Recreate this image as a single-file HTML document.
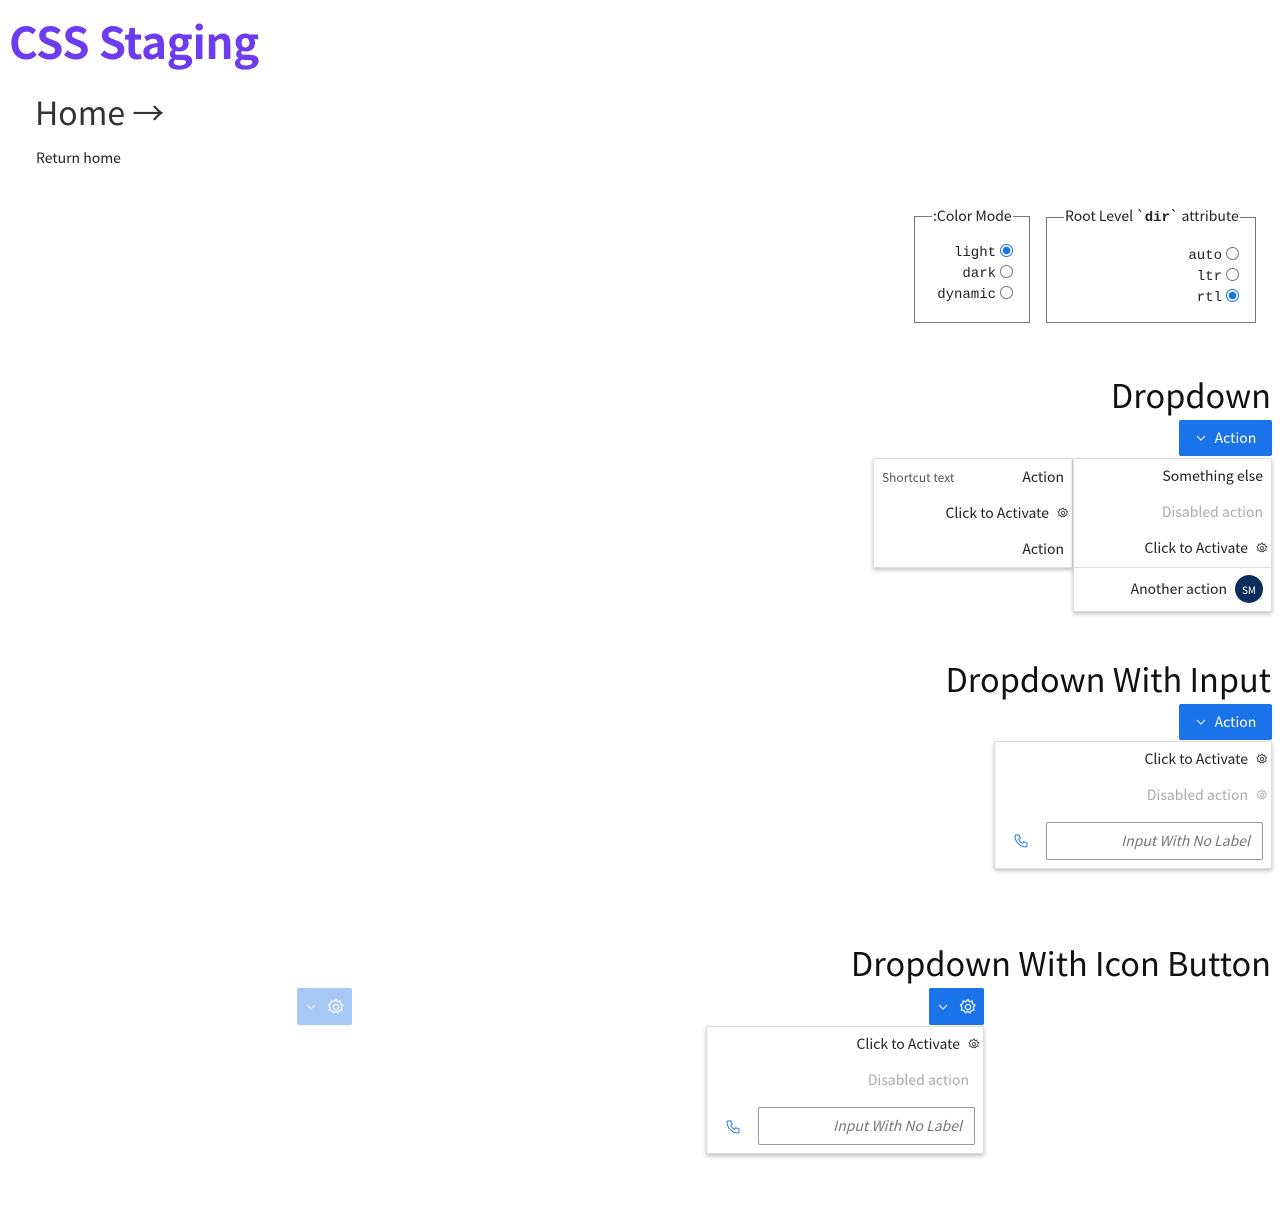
<!DOCTYPE html>
<html><head><meta charset="utf-8"><style>
*{box-sizing:border-box}
body{margin:0;width:1280px;height:1225px;position:relative;font-family:"Noto Sans CJK SC","Liberation Sans",sans-serif;color:#222;background:#fff;overflow:hidden}
.a{position:absolute;white-space:nowrap}
h1{position:absolute;margin:0;left:9px;top:8px;font-size:44px;font-weight:700;color:#6d3cf0;line-height:64px;letter-spacing:-0.5px}
.mono{font-family:"Liberation Mono",monospace;font-size:14px}
fieldset{position:absolute;border:1px solid #777;margin:0;padding:0}
legend{font-size:14px;padding:0 1px;color:#222;line-height:16px;margin-left:17px}
.radio{display:inline-block;width:13px;height:13px;border:1px solid #777;border-radius:50%;vertical-align:-1px;margin-left:4px;background:#fff}
.radio.on{border:1px solid #1a73e8;background:radial-gradient(circle,#1a73e8 0 3.5px,#fff 4px)}
.h2{font-size:32.5px;color:#111;line-height:40px;text-align:right}
.btn{position:absolute;background:#1a73e8;color:#fff;font-size:14px;border-radius:2px;display:flex;align-items:center;justify-content:center;gap:8px}
.menu{position:absolute;background:#fff;border:1px solid #ddd;box-shadow:0 2px 4px rgba(0,0,0,.25);border-radius:2px}
.it{position:absolute;right:8px;font-size:14px;color:#222;white-space:nowrap;display:flex;align-items:center;gap:8px}
.dis{color:#aaa}
.gear{width:12px;height:12px}
.inp{position:absolute;border:1px solid #999;border-radius:2px;font-style:italic;color:#777;font-size:14px;text-align:right;padding:8px 12px;line-height:20px}
</style></head><body>
<h1>CSS Staging</h1>
<div class="a" style="left:35px;top:90px;font-size:32px;color:#333;line-height:44px">Home →</div>
<div class="a" style="left:36px;top:148px;font-size:14px;color:#222">Return home</div>

<fieldset style="left:914px;top:208px;width:116px;height:115px">
<legend>:Color Mode</legend>
<div class="a mono" style="right:16px;top:19px;text-align:right;line-height:21px">light<span class="radio on"></span><br>dark<span class="radio"></span><br>dynamic<span class="radio"></span></div>
</fieldset>
<fieldset style="left:1046px;top:208px;width:210px;height:115px">
<legend>Root Level `<b class="mono" style="font-weight:700">dir</b>` attribute</legend>
<div class="a mono" style="right:16px;top:20px;text-align:right;line-height:21px">auto<span class="radio"></span><br>ltr<span class="radio"></span><br>rtl<span class="radio on"></span></div>
</fieldset>

<svg width="0" height="0" style="position:absolute"><defs>
<symbol id="g" viewBox="0 0 24 24"><path d="M12 2l2 3 3.5-.8.6 3.5 3 1.9-1.9 3 .8 3.5-3.5.6-1.9 3-3-1.9-3 1.9-1.9-3-3.5-.6.8-3.5L2 9.4l3-1.9.6-3.5L9 4.9z" fill="none" stroke="currentColor" stroke-width="1.6"/><circle cx="12" cy="12" r="3.5" fill="none" stroke="currentColor" stroke-width="1.6"/></symbol>
<symbol id="c" viewBox="0 0 12 12"><path d="M2 4l4 4 4-4" fill="none" stroke="currentColor" stroke-width="1"/></symbol>
<symbol id="p" viewBox="0 0 24 24"><path d="M5 3l4 0 2 5-2.5 1.5a11 11 0 0 0 6 6L16 13l5 2v4a2 2 0 0 1-2 2A17 17 0 0 1 3 5a2 2 0 0 1 2-2z" fill="none" stroke="#1a73e8" stroke-width="1.4"/></symbol>
</defs></svg>

<div class="a h2" style="right:9px;top:375px">Dropdown</div>
<div class="btn" style="left:1179px;top:420px;width:93px;height:36px"><svg width="12" height="12"><use href="#c"/></svg>Action</div>
<div class="menu" style="left:873px;top:458px;width:200px;height:110px">
<div class="a" style="left:8px;top:10px;font-size:12px;color:#555">Shortcut text</div>
<div class="it" style="top:8px">Action</div>
<div class="it" style="top:44px;right:3px">Click to Activate<svg class="gear"><use href="#g"/></svg></div>
<div class="it" style="top:80px">Action</div>
</div>
<div class="menu" style="left:1073px;top:458px;width:199px;height:154px">
<div class="it" style="top:7px">Something else</div>
<div class="it dis" style="top:43px">Disabled action</div>
<div class="it" style="top:79px;right:3px">Click to Activate<svg class="gear"><use href="#g"/></svg></div>
<div class="a" style="left:0;right:0;top:108px;border-top:1px solid #ddd"></div>
<div class="it" style="top:116px">Another action<span style="width:28px;height:28px;border-radius:50%;background:#0b2e5c;color:#fff;font-size:10px;display:flex;align-items:center;justify-content:center">SM</span></div>
</div>

<div class="a h2" style="right:9px;top:659px">Dropdown With Input</div>
<div class="btn" style="left:1179px;top:704px;width:93px;height:36px"><svg width="12" height="12"><use href="#c"/></svg>Action</div>
<div class="menu" style="left:994px;top:741px;width:278px;height:128px">
<div class="it" style="top:7px;right:3px">Click to Activate<svg class="gear"><use href="#g"/></svg></div>
<div class="it dis" style="top:43px;right:3px">Disabled action<svg class="gear" style="color:#aaa"><use href="#g"/></svg></div>
<svg class="a" style="left:18px;top:91px" width="16" height="16"><use href="#p"/></svg>
<div class="inp" style="left:51px;top:80px;width:217px;height:38px">Input With No Label</div>
</div>

<div class="a h2" style="right:9px;top:943px">Dropdown With Icon Button</div>
<div class="btn" style="left:297px;top:988px;width:55px;height:37px;background:#a6c8f5;gap:10px"><svg width="12" height="12"><use href="#c"/></svg><svg width="18" height="18"><use href="#g"/></svg></div>
<div class="btn" style="left:929px;top:988px;width:55px;height:37px;gap:10px"><svg width="12" height="12"><use href="#c"/></svg><svg width="18" height="18"><use href="#g"/></svg></div>
<div class="menu" style="left:706px;top:1026px;width:278px;height:128px">
<div class="it" style="top:7px;right:3px">Click to Activate<svg class="gear"><use href="#g"/></svg></div>
<div class="it dis" style="top:43px;right:14px">Disabled action</div>
<svg class="a" style="left:18px;top:92px" width="16" height="16"><use href="#p"/></svg>
<div class="inp" style="left:51px;top:80px;width:217px;height:38px">Input With No Label</div>
</div>
</body></html>
